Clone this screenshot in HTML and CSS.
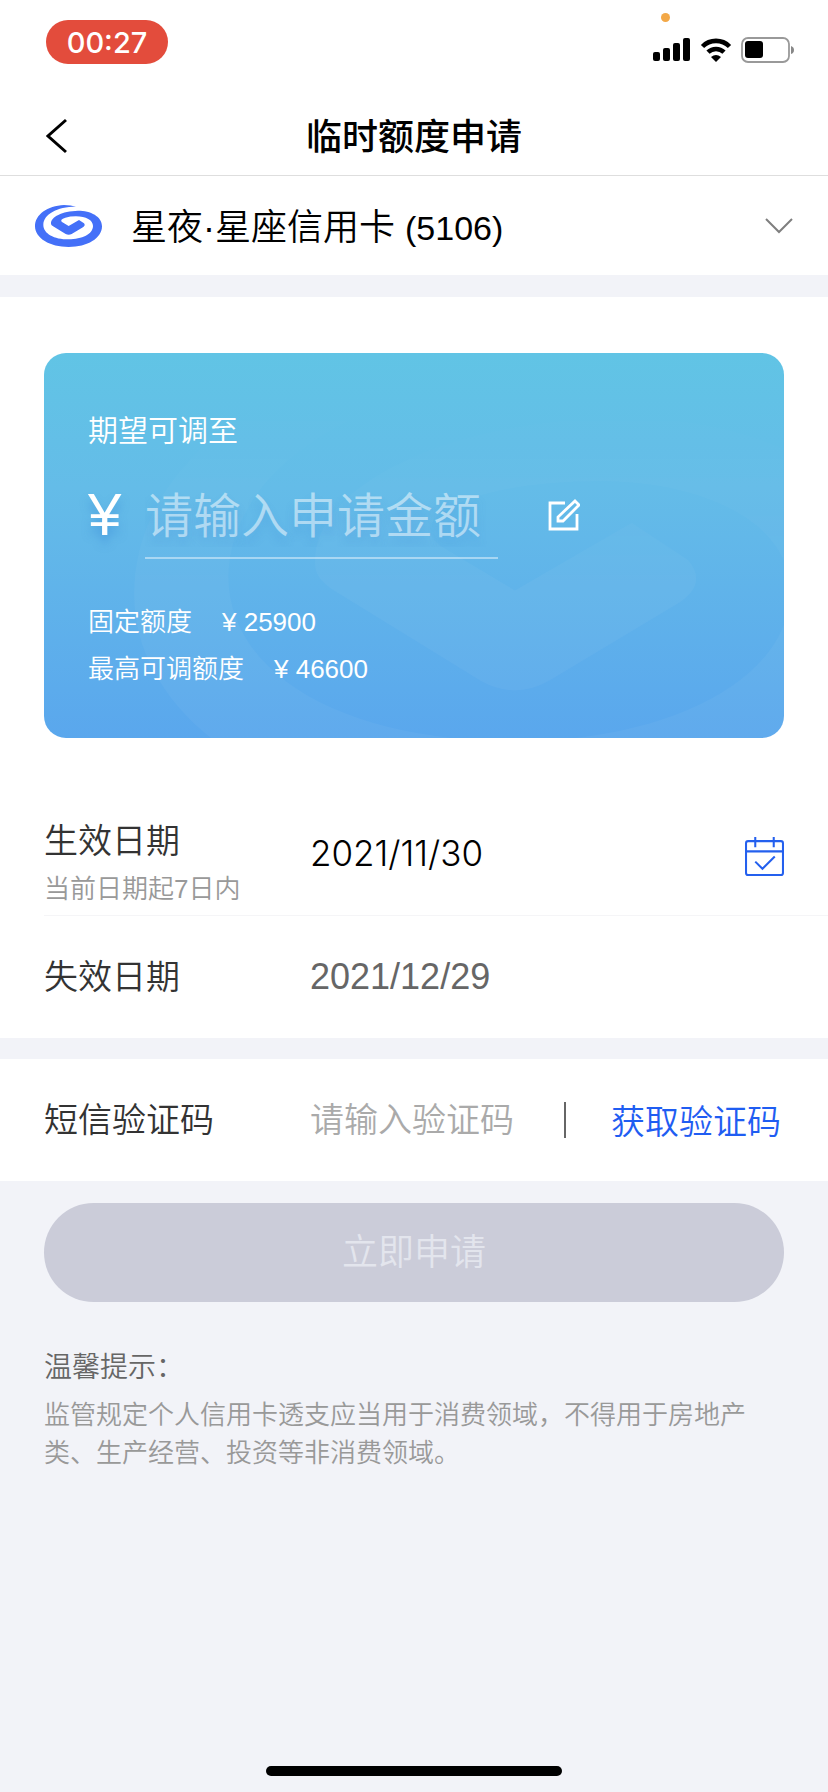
FILE: index.html
```html
<!DOCTYPE html>
<html lang="zh-CN">
<head>
<meta charset="utf-8">
<meta name="viewport" content="width=device-width">
<title>临时额度申请</title>
<link rel="stylesheet" href="styles.css">
</head>
<body>
<svg class="defs" aria-hidden="true">
  <symbol id="swirl" viewBox="105 618 201 126">
    <path d="M228 623Q214 618 192 618C142 620 105 647 105 682C105 718 150 744 206 744C262 744 306 718 306 682C306 652 272 635 234 635C186 636 152 654 153 674Q153 678 158 681L197 705Q206 710 215 705L250 684Q257 679 252 673L237 663L206 681L186 669Q178 662 196 656Q210 652 228 652C258 652 279 664 279 681C279 705 246 721 206 721C162 721 130 704 130 677C131 646 170 623 228 623Z"/>
  </symbol>
</svg>
<div class="screen">
  <div class="status">
    <span class="time">00:27</span>
    <div class="signals">
      <span class="dot"></span>
      <svg width="38" height="24" viewBox="0 0 38 24"><rect y="14" width="7" height="9" rx="2"/><rect x="10" y="10" width="7" height="13" rx="2"/><rect x="20" y="5" width="7" height="18" rx="2"/><rect x="30" width="7" height="23" rx="2"/></svg>
      <svg width="32" height="24" viewBox="0 0 32 24"><path d="M2.5 8.5A19 19 0 0 1 29.500 8.500M8 14.200A11.500 11.500 0 0 1 24 14.200" fill="none" stroke="#000" stroke-width="4.600"/><path d="M11 19Q16 15 21 19L16 24Z"/></svg>
      <svg width="54" height="26" viewBox="0 0 54 26"><rect x="1" y="1" width="47" height="24" rx="6" fill="none" stroke="#999" stroke-width="1.800"/><rect x="4" y="4" width="18" height="17" rx="3"/><path d="M50 9Q53 10 53 13T50 17Z" fill="#888"/></svg>
    </div>
  </div>
  <header class="nav">
    <button class="back" type="button" aria-label="返回"><svg width="22" height="36" viewBox="0 0 22 36"><path d="M20 2L2 18L20 34" fill="none" stroke="#000" stroke-width="3"/></svg></button>
    <h1 class="title">临时额度申请</h1>
  </header>
  <button class="account" type="button">
    <svg class="logo" width="67" height="42"><use href="#swirl"/></svg>
    <span class="account-name">星夜·星座信用卡 <span class="digits">(5106)</span></span>
    <svg width="28" height="16" viewBox="0 0 28 16"><path d="M1 1L14 14L27 1" fill="none" stroke="#7f7f7f" stroke-width="2"/></svg>
  </button>
  <form>
    <section class="panel amount">
      <div class="card">
        <svg class="watermark" viewBox="0 0 740 385" preserveAspectRatio="xMaxYMid slice" aria-hidden="true"><use href="#swirl" x="90" width="758" height="475"/></svg>
        <label class="card-label" for="amount">期望可调至</label>
        <div class="amount-line">
          <span class="yen">¥</span>
          <input class="amount-input" id="amount" type="text" placeholder="请输入申请金额">
          <button class="edit" type="button" aria-label="编辑"><svg width="32" height="32" viewBox="0 0 32 32" fill="none" stroke="#fff" stroke-width="2.800"><path d="M17 4H2V30H29V15"/><path d="M27 2L31 6L15 22H10V18Z"/></svg></button>
        </div>
        <div class="limits">
          <div class="limit"><span>固定额度</span><span>¥ 25900</span></div>
          <div class="limit"><span>最高可调额度</span><span>¥ 46600</span></div>
        </div>
      </div>
    </section>
    <section class="panel rows">
      <div class="row first">
        <div class="label"><label for="start">生效日期</label><small class="sub">当前日期起7日内</small></div>
        <input class="field start" id="start" type="text" value="2021/11/30">
        <button class="calendar" type="button" aria-label="选择日期"><svg width="39" height="39" viewBox="0 0 38 38" fill="none" stroke="#2460ee" stroke-width="2"><rect x="1" y="4" width="36" height="33" rx="2"/><path d="M1 14H37M10 0V10M28 0V10M10 24L17 31L29 19"/></svg></button>
      </div>
      <div class="row">
        <label class="label" for="end">失效日期</label>
        <input class="field end" id="end" type="text" value="2021/12/29" readonly>
      </div>
    </section>
    <section class="panel rows">
      <div class="row">
        <label class="label" for="code">短信验证码</label>
        <input class="field code" id="code" type="text" placeholder="请输入验证码">
        <button class="get-code" type="button">获取验证码</button>
      </div>
    </section>
    <button class="submit" type="submit" disabled>立即申请</button>
  </form>
  <section class="hint">
    <h2 class="hint-title">温馨提示：</h2>
    <p class="hint-text">监管规定个人信用卡透支应当用于消费领域，不得用于房地产类、生产经营、投资等非消费领域。</p>
  </section>
  <div class="home"></div>
</div>
</body>
</html>
```
FILE: styles.css
```css
* { box-sizing: border-box; }
body {
  margin: 0;
  background: #f2f3f8;
  color: #333;
  font: 350 34px/48px "Liberation Sans", "Noto Sans CJK SC", sans-serif;
}
button, input {
  margin: 0;
  padding: 0;
  border: 0;
  background: none;
  color: inherit;
  font: inherit;
  outline: 0;
}
svg { display: block; flex: none; }
.defs { position: absolute; width: 0; height: 0; }
.screen { display: flex; flex-direction: column; min-height: 100vh; }
.status {
  display: flex;
  justify-content: space-between;
  align-items: flex-start;
  height: 96px;
  padding: 20px 33px 0 46px;
  background: #fff;
}
.time {
  width: 122px;
  border-radius: 22px;
  background: #e34c3c;
  color: #fff;
  font: 500 29px/46px Inter, sans-serif;
  height: 44px;
  text-align: center;
}
.signals { position: relative; display: flex; align-items: center; gap: 9px; padding-top: 17px; }
.dot { position: absolute; left: 8px; top: -7px; width: 9px; height: 9px; border-radius: 50%; background: #f3a847; }
.nav {
  display: grid;
  grid-template-columns: 60px 1fr 60px;
  align-items: center;
  height: 80px;
  padding: 0 46px;
  border-bottom: 1px solid #dedede;
  background: #fff;
}
.title { margin: 0; padding-top: 4px; color: #000; font-size: 36px; font-weight: 500; text-align: center; }
.account {
  display: flex;
  align-items: center;
  height: 99px;
  padding: 0 35px;
  background: #fff;
  color: #000;
  font-size: 36px;
  text-align: left;
}
.logo { fill: #4470f8; }
.account-name { flex: 1; padding: 4px 0 0 29px; }
.digits { font-size: 34px; }
.panel { background: #fff; }
.amount { margin-top: 22px; padding: 56px 44px 52px; }
.card {
  position: relative;
  overflow: hidden;
  padding: 54px 44px 45px;
  border-radius: 22px;
  background: linear-gradient(#61c4e5, #64bce8 35%, #5aa7ed);
  color: #fff;
}
.watermark {
  position: absolute;
  inset: 0;
  width: 100%;
  height: 100%;
  fill: #fff;
  fill-opacity: .04;
  mask-image: linear-gradient(transparent 10%, #000 60%);
}
.card-label { position: relative; display: block; font-size: 30px; }
.amount-line { position: relative; display: flex; align-items: center; height: 104px; }
.yen { width: 57px; padding-top: 16px; font-size: 60px; line-height: 72px; text-shadow: 0 8px 8px #3c8cd880; }
.amount-input {
  width: 353px;
  height: 104px;
  padding-top: 20px;
  border-bottom: 2px solid #ffffff70;
  font-size: 48px;
  text-shadow: 0 8px 8px #3c8cd840;
}
.amount-input::placeholder { color: #ffffff80; opacity: 1; }
.edit { margin-left: 50px; padding-top: 16px; }
.limits { position: relative; padding-top: 40px; font-size: 26px; line-height: 47px; }
.limit { display: flex; gap: 30px; }
.row {
  display: flex;
  align-items: center;
  height: 122px;
  margin-left: 44px;
  padding-right: 44px;
}
.first { height: 126px; border-bottom: 1px solid #f5f5f7; }
.label { width: 266px; }
.first .label { padding-top: 24px; }
.label label, .sub { display: block; }
.sub { color: #999; font-size: 26px; }
.field { flex: 1; min-width: 0; }
.start { color: #000; font-family: Inter, sans-serif; font-size: 35px; }
.end { color: #666; font-size: 36px; }
.rows + .rows { margin-top: 21px; }
.calendar { padding-top: 8px; }
.code::placeholder { color: #aaa; opacity: 1; }
.get-code { padding: 4px 3px 0 47px; color: #1f5df2; background: linear-gradient(#666, #666) left center / 2px 36px no-repeat; }
.submit {
  display: block;
  width: calc(100% - 88px);
  height: 99px;
  margin: 22px 44px 0;
  border-radius: 50px;
  background: #cbccd9;
  color: #e3e5ed;
  font-size: 36px;
}
.hint { padding: 42px 76px 0 44px; }
.hint-title { margin: 0; color: #666; font-size: 28px; font-weight: 350; }
.hint-text { margin: 4px 0 0; color: #999; font-size: 26px; line-height: 38px; }
.home { width: 296px; height: 10px; margin: auto auto 16px; border-radius: 5px; background: #000; }
```
